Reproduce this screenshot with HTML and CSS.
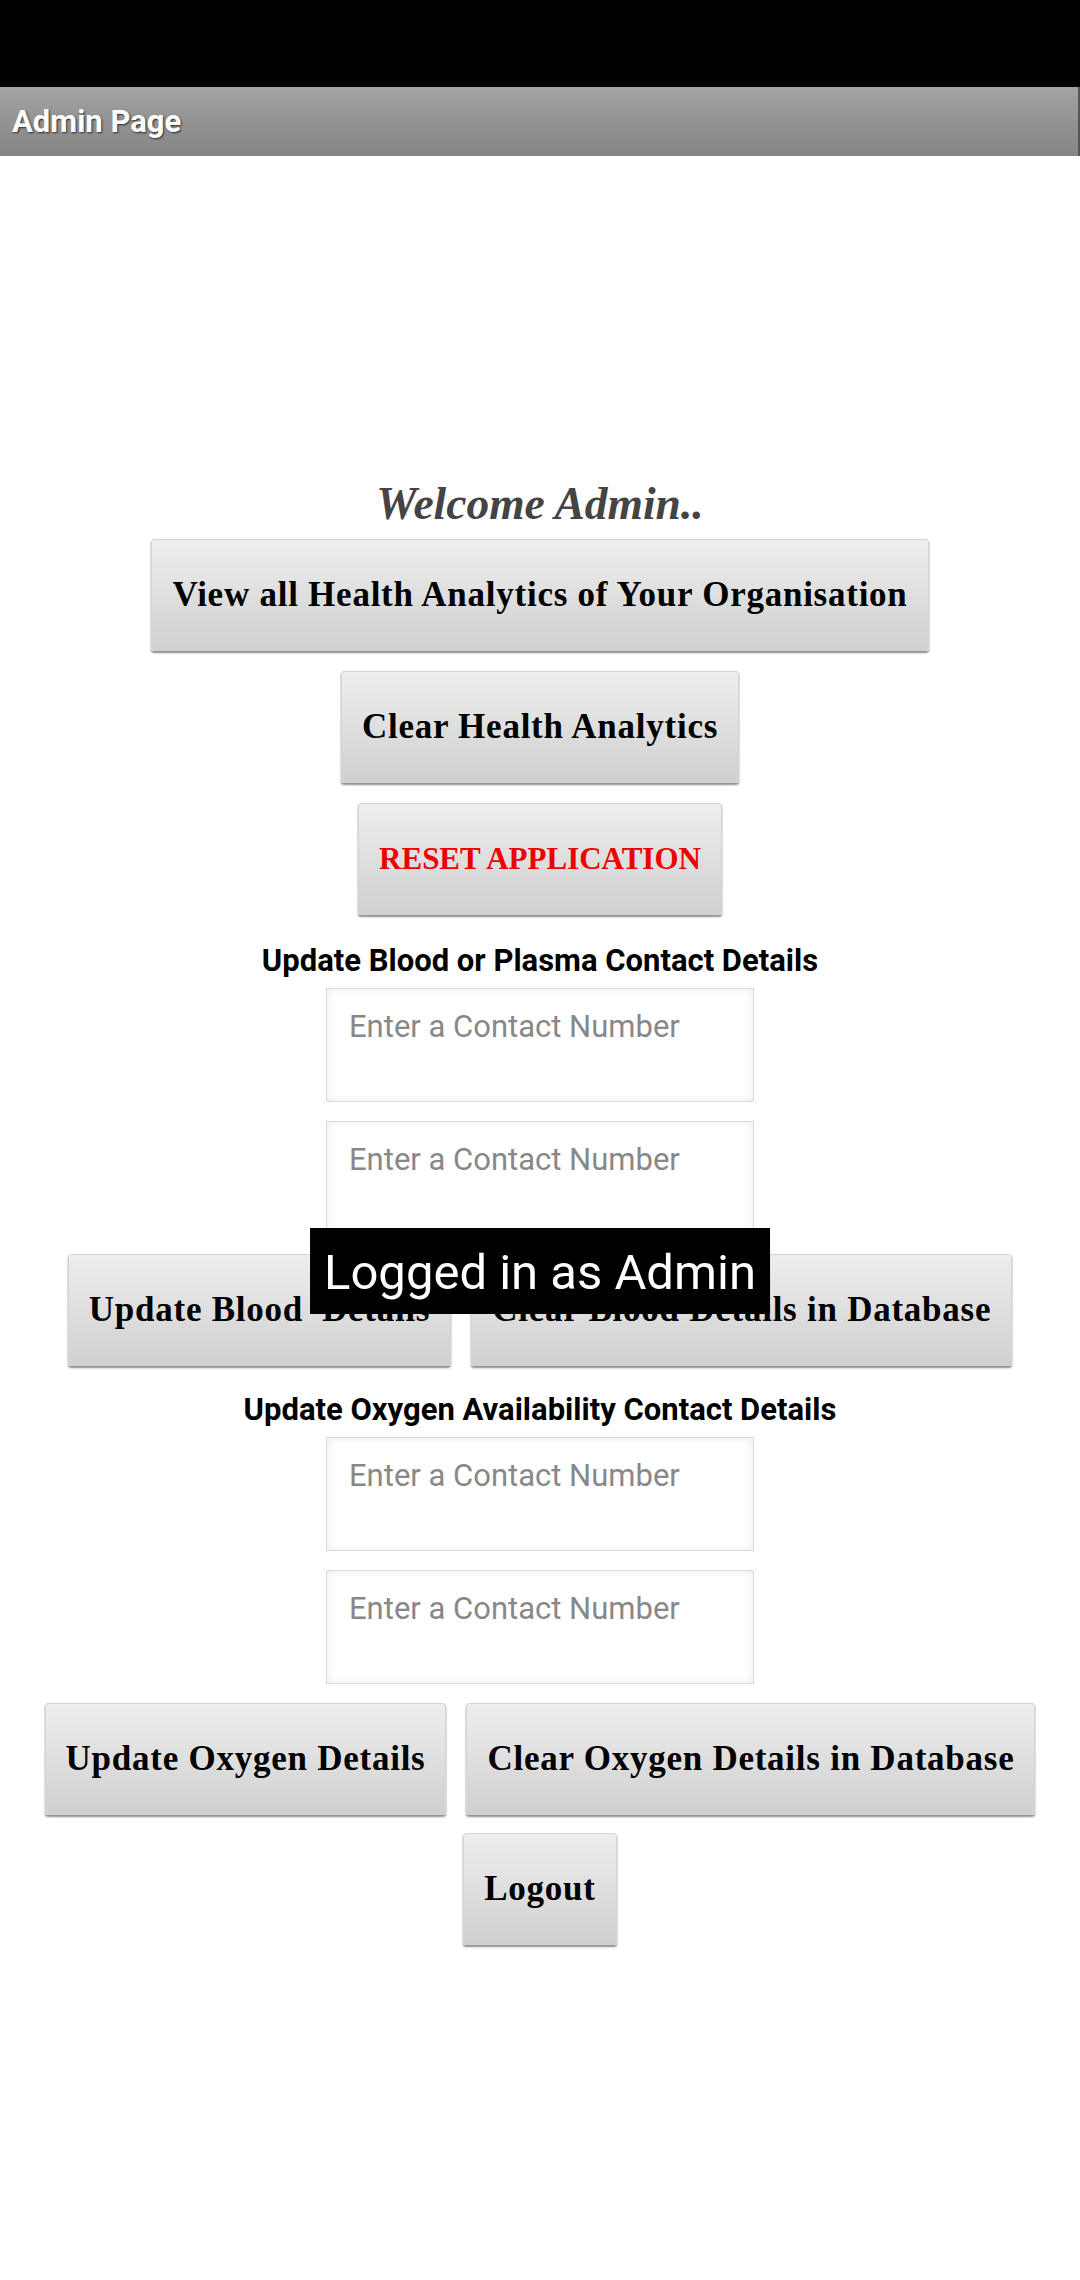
FILE: index.html
```html
<!DOCTYPE html>
<html lang="en">
<head>
    <meta charset="UTF-8">
    <meta name="viewport" content="width=device-width, initial-scale=1.0">
    <title>Admin Page</title>
    <link rel="stylesheet" href="styles.css">
</head>
<body>

    <div class="status-bar"></div>
    <header class="title-bar">Admin Page</header>

    <main class="content">
        <h2 class="welcome">Welcome Admin..</h2>

        <button class="btn">View all Health Analytics of Your Organisation</button>
        <button class="btn">Clear Health Analytics</button>
        <button class="btn btn-danger">RESET APPLICATION</button>

        <p class="section-label">Update Blood or Plasma Contact Details</p>
        <textarea class="contact-input" placeholder="Enter a Contact Number"></textarea>
        <textarea class="contact-input" placeholder="Enter a Contact Number"></textarea>

        <div class="button-row">
            <button class="btn">Update Blood  Details</button>
            <button class="btn">Clear Blood Details in Database</button>
        </div>

        <p class="section-label">Update Oxygen Availability Contact Details</p>
        <textarea class="contact-input" placeholder="Enter a Contact Number"></textarea>
        <textarea class="contact-input" placeholder="Enter a Contact Number"></textarea>

        <div class="button-row">
            <button class="btn">Update Oxygen Details</button>
            <button class="btn">Clear Oxygen Details in Database</button>
        </div>

        <button class="btn">Logout</button>
    </main>

    <div class="toast">Logged in as Admin</div>

</body>
</html>
```

FILE: styles.css
```css
body {
    margin: 0;
    padding: 0;
    background-color: #fff;
    font-family: Roboto, "Liberation Sans", sans-serif;
    width: 1080px;
    min-height: 2280px;
    position: relative;
}

.status-bar {
    height: 87px;
    background-color: #000;
}

.title-bar {
    height: 69px;
    line-height: 69px;
    padding-left: 12px;
    background: linear-gradient(#a3a3a3, #848484);
    border-right: 2px solid #555;
    color: #fff;
    font-size: 31px;
    font-weight: bold;
    text-shadow: 1px 1px 2px rgba(0, 0, 0, 0.7);
}

.content {
    display: flex;
    flex-direction: column;
    align-items: center;
}

.welcome {
    margin: 323px 0 10px;
    line-height: 50px;
    font-family: "Liberation Serif", serif;
    font-style: italic;
    font-weight: bold;
    font-size: 45.5px;
    color: #444;
}

.btn {
    height: 112px;
    box-sizing: border-box;
    margin: 0 0 20px;
    padding: 0 20px;
    font-family: "Liberation Serif", serif;
    font-size: 35px;
    letter-spacing: 0.75px;
    font-weight: bold;
    color: #000;
    white-space: pre;
    background: linear-gradient(#eeeeee, #d0d0d0);
    border: 1px solid #d4d4d4;
    border-radius: 3px;
    box-shadow: 0 2px 2px rgba(0, 0, 0, 0.45);
    cursor: pointer;
}

.btn-danger {
    color: #ee0000;
    font-size: 31px;
    letter-spacing: 0;
}

.section-label {
    margin: 8px 0 9px;
    line-height: 36px;
    font-size: 31px;
    font-weight: bold;
    color: #000;
}

.contact-input {
    display: block;
    width: 428px;
    height: 114px;
    box-sizing: border-box;
    margin: 0 0 19px;
    padding: 20px 22px 0;
    font-family: Roboto, sans-serif;
    font-size: 31px;
    line-height: 36px;
    border: 1px solid #dadada;
    border-radius: 0;
    background-color: #fff;
    box-shadow: inset 0 0 10px rgba(0, 0, 0, 0.08);
    resize: none;
    overflow: hidden;
    outline: none;
}

.contact-input::placeholder {
    color: #888;
}

.button-row {
    display: flex;
    justify-content: center;
    gap: 20px;
    margin-bottom: 18px;
}

.button-row .btn {
    margin: 0;
}

.toast {
    position: absolute;
    top: 1228px;
    left: 50%;
    transform: translateX(-50%);
    height: 86px;
    box-sizing: border-box;
    padding: 4px 14px 0;
    line-height: 82px;
    background-color: #000;
    color: #fff;
    font-size: 49px;
    white-space: nowrap;
}
```
